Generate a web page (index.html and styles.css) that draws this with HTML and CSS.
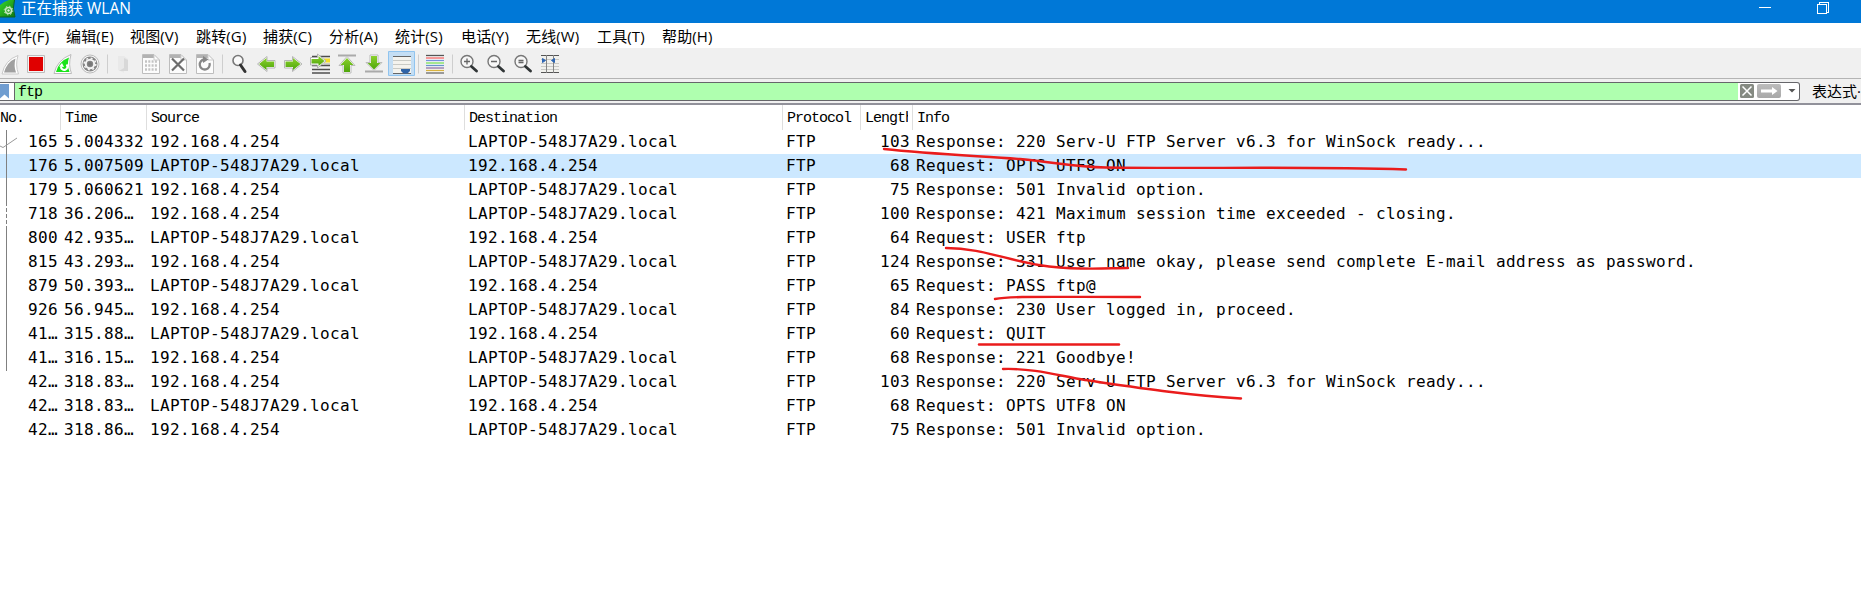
FILE: index.html
```
<!DOCTYPE html>
<html lang="zh-CN">
<head>
<meta charset="utf-8">
<title>正在捕获 WLAN</title>
<link rel="stylesheet" href="styles.css">
</head>
<body>
<svg width="0" height="0" class="defs">
  <defs>
    <linearGradient id="green" x1="0" y1="0" x2="0" y2="1"><stop offset="0" stop-color="#8ad02c"/><stop offset="1" stop-color="#4fa60c"/></linearGradient>
    <linearGradient id="logo" x1="0" y1="0" x2="1" y2="1"><stop offset="0" stop-color="#35d62c"/><stop offset="1" stop-color="#12770f"/></linearGradient>
    <linearGradient id="go" x1="0" y1="0" x2="0" y2="1"><stop offset="0" stop-color="#bcbcbc"/><stop offset="1" stop-color="#a8a8a8"/></linearGradient>
  </defs>
</svg>
<header class="titlebar">
  <svg class="logo" width="16" height="18" viewBox="0 0 16 18"><path d="M0 5Q4 1.500 9 0H14.500Q12 8 15 17H0Z" fill="url(#logo)"/><path d="M14.500 0Q12 8 15 17H0" fill="none" stroke="#0b6421"/><circle cx="8.500" cy="10.500" r="3" fill="none" stroke="#c9e9c2" stroke-width="1.500"/><circle cx="8.500" cy="10.500" r="1.200" fill="#e9f7e4"/><circle cx="8.500" cy="10.500" r="4.300" fill="none" stroke="#c9e9c2" stroke-dasharray="1.500 1.877"/></svg>
  <span class="caption">正在捕获 WLAN</span>
  <svg class="win" width="90" height="23" viewBox="0 0 90 23" fill="none" stroke="#fff" shape-rendering="crispEdges"><path d="M8 7.500H20"/><path d="M68.500 4V2.500H77.500V12H76"/><path d="M66.500 4.500H75.500V13.500H66.500Z"/></svg>
</header>
<nav class="menu">
  <span>文件(F)</span><span>编辑(E)</span><span>视图(V)</span><span>跳转(G)</span><span>捕获(C)</span><span>分析(A)</span><span>统计(S)</span><span>电话(Y)</span><span>无线(W)</span><span>工具(T)</span><span>帮助(H)</span>
</nav>
<div class="toolbar">
  <svg width="570" height="28" viewBox="0 50 570 28">
    <!-- start -->
    <path d="M2 74Q5 60 18 55.500Q15 65 18.500 74Z" fill="#fff" stroke="#c9c9c9"/><path d="M4 72.500Q7 62 15.500 58.500Q13.500 66 16 72.500Z" fill="#a0a0a0"/>
    <!-- stop -->
    <path d="M27.500 55.500H44.500V72.500H27.500Z" fill="#f4f4f4" stroke="#bdbdbd"/><path d="M29 57H43V71H29Z" fill="#e00000"/>
    <!-- restart -->
    <path d="M54 73.500Q57 60 71 54.500Q68 65 71.500 73.500Z" fill="#fff" stroke="#bbb"/><path d="M56 72Q59 61 69 57.500Q66.500 65 69.500 72Z" fill="#19e319"/><path d="M61 66.500A3.200 3.200 0 1 0 66.500 64.500" fill="none" stroke="#fff" stroke-width="2"/><path d="M59 66.500L62 63L64 67Z" fill="#fff"/>
    <!-- options -->
    <circle cx="90" cy="64" r="9" fill="#f8f8f8" stroke="#bbb"/><circle cx="90" cy="64" r="7.500" fill="#858585"/><circle cx="90" cy="64" r="4.200" fill="none" stroke="#f4f4f4" stroke-width="2"/><circle cx="90" cy="64" r="5.800" fill="none" stroke="#f4f4f4" stroke-width="1.500" stroke-dasharray="2 2.550"/><circle cx="90" cy="64" r="2" fill="#777"/>
    <path d="M107.500 54.500V73.500M222.500 54.500V73.500M418.500 54.500V73.500M452.500 54.500V73.500" stroke="#cecece"/>
    <!-- open -->
    <path d="M118 56H124L128 59V71H124V73L118 70Z" fill="#e9e9e9"/><path d="M124 58L128 60V71H119L124 68Z" fill="#d8d8d8"/>
    <!-- save, close, reload -->
    <g fill="#fcfcfc" stroke="#bdbdbd"><path d="M142.500 54.500H154L159.500 60V73.500H142.500Z"/><path d="M169.500 54.500H181L186.500 60V73.500H169.500Z"/><path d="M196.500 54.500H208L213.500 60V73.500H196.500Z"/></g>
    <g fill="#b2b2b2"><path d="M143 55H154V58H143ZM170 55H181V58H170ZM197 55H208V58H197Z"/></g>
    <path d="M154 55V60H159M181 55V60H186M208 55V60H213" fill="none" stroke="#ccc"/>
    <path d="M145 61.500H158M145 65.500H158M145 69.500H158" stroke="#c3c3c3" stroke-width="2.500" stroke-dasharray="2 1.300"/>
    <path d="M172 58.500L184 70.500M184 58.500L172 70.500" stroke="#6c6c6c" stroke-width="2.200"/>
    <path d="M209.500 63A5 5 0 1 1 204.500 59.500" fill="none" stroke="#878787" stroke-width="2.300"/><path d="M203 56L208.500 59.500L203 63Z" fill="#878787"/>
    <!-- find -->
    <circle cx="238" cy="60.500" r="5" fill="#fafafa" stroke="#777" stroke-width="1.600"/><path d="M240.500 65L245 71.500" stroke="#333" stroke-width="3" stroke-linecap="round"/>
    <!-- navigation arrows -->
    <g fill="#fff" stroke="#b5b5b5"><path d="M257.500 64L267 56.500V60.500H275V68H267V71.500Z"/><path d="M302 64L292.500 56.500V60.500H284.500V68H292.500V71.500Z"/></g>
    <g fill="url(#green)"><path d="M259 64L266.500 58V61.500H274V67H266.500V70Z"/><path d="M300.500 64L293 58V61.500H285.500V67H293V70Z"/></g>
    <!-- go to packet -->
    <path d="M312 56.500H330M312 65.500H330M312 69.500H330M312 73H330" stroke="#4d4d4d" stroke-width="1.300"/><path d="M324 60.500H330" stroke="#f3dc2c" stroke-width="4"/><path d="M324 64H330" stroke="#aaa"/>
    <path d="M310.500 57.500H317.500V54L326 61L317.500 68V65H310.500Z" fill="#fff" stroke="#b2b2b2"/><path d="M311.500 59H318.500V56L324.500 61L318.500 66V63.500H311.500Z" fill="url(#green)"/>
    <!-- first and last -->
    <path d="M338 55.500H356M365 71.500H383" stroke="#aaa" stroke-width="2"/>
    <path d="M347 56.500L355 65.500H351V73H343V65.500H339Z" fill="#fff" stroke="#bbb"/><path d="M347 58L353.500 65H350V72H344V65H340.500Z" fill="url(#green)"/>
    <path d="M374 70.500L382 62.500H378V55H370V62.500H366Z" fill="#fff" stroke="#bbb"/><path d="M374 69.500L380.500 63H377V56H371V63H367.500Z" fill="url(#green)"/>
    <!-- auto scroll -->
    <path d="M388.500 51.500H414.500V75.500H388.500Z" fill="#c4def4" stroke="#90c4ef"/><path d="M393 56H411V74H393Z" fill="#f4f3ee"/><path d="M393 56.500H411M393 73.500H411" stroke="#666"/><path d="M393 60.500H411M393 64.500H411M393 68.500H411" stroke="#c9cac5"/><path d="M401 69H410V71L407.500 73.500H403.500L401 71Z" fill="#2f63a6"/>
    <!-- colorize -->
    <path d="M426 55H444V74H426Z" fill="#f8f8f8"/><g stroke-width="1.300"><path d="M426 55.500H444" stroke="#555"/><path d="M426 58H444" stroke="#f36464"/><path d="M426 60.500H444" stroke="#7693db"/><path d="M426 63H444" stroke="#77df55"/><path d="M426 65.500H444" stroke="#6795c9"/><path d="M426 68H444" stroke="#8d71a4"/><path d="M426 70.500H444" stroke="#d9b33f"/><path d="M426 73H444" stroke="#666"/></g>
    <!-- zoom -->
    <g fill="#f7f7f7" stroke="#777" stroke-width="1.400"><circle cx="467" cy="61.500" r="6"/><circle cx="494" cy="61.500" r="6"/><circle cx="521" cy="61.500" r="6"/></g>
    <path d="M471.500 66.500L476.500 71M498.500 66.500L503.500 71M525.500 66.500L530.500 71" stroke="#303536" stroke-width="2.800" stroke-linecap="round"/>
    <path d="M464 61.500H470M467 58.500V64.500M491 61.500H497M518.500 60.500H523.500M518.500 62.500H523.500" stroke="#666" stroke-width="1.300"/>
    <!-- resize columns -->
    <path d="M541 55H559V73H541Z" fill="#f1f1ed"/><path d="M541 55.500H559M541 72.500H559" stroke="#555"/><path d="M541 59.500H559M541 63.500H559M541 66.500H559M541 69.500H559" stroke="#c9c9c5"/><path d="M546.500 55V73M553.500 55V73" stroke="#858585"/><path d="M542.500 58.500L545.500 60.500L542.500 62.500ZM554.500 58.500V62.500L551.500 60.500Z" fill="#2e65b2" stroke="#2e65b2"/>
  </svg>
</div>
<div class="filterbar">
  <div class="filter">
    <div class="mark"><svg width="9" height="15" viewBox="0 0 9 15"><path d="M0 0H9V14.500L4.500 10.500L0 14.500Z" fill="#709dd0"/></svg></div>
    <div class="query">ftp</div>
    <svg class="controls" width="61" height="17" viewBox="0 0 61 17"><rect x="2" y="1" width="14" height="14" rx="1.500" fill="#858a82"/><path d="M4.500 3.500L13.500 12.500M13.500 3.500L4.500 12.500" stroke="#fff" stroke-width="1.500"/><rect x="19" y="1" width="24" height="14" rx="2" fill="url(#go)"/><path d="M23 6.500H34V4L39.500 8L34 12V9.500H23Z" fill="#fff"/><path d="M50.500 6H57.500L54 9.500Z" fill="#555"/></svg>
  </div>
  <div class="expression">表达式·</div>
</div>
<main class="packets">
  <div class="head"><span>No.</span><span>Time</span><span>Source</span><span>Destination</span><span>Protocol</span><span class="length"><i>Length</i></span><span>Info</span></div>
  <div class="row"><span>165</span><span>5.004332</span><span>192.168.4.254</span><span>LAPTOP-548J7A29.local</span><span>FTP</span><span>103</span><span>Response: 220 Serv-U FTP Server v6.3 for WinSock ready...</span></div>
  <div class="row selected"><span>176</span><span>5.007509</span><span>LAPTOP-548J7A29.local</span><span>192.168.4.254</span><span>FTP</span><span>68</span><span>Request: OPTS UTF8 ON</span></div>
  <div class="row"><span>179</span><span>5.060621</span><span>192.168.4.254</span><span>LAPTOP-548J7A29.local</span><span>FTP</span><span>75</span><span>Response: 501 Invalid option.</span></div>
  <div class="row"><span>718</span><span>36.206…</span><span>192.168.4.254</span><span>LAPTOP-548J7A29.local</span><span>FTP</span><span>100</span><span>Response: 421 Maximum session time exceeded - closing.</span></div>
  <div class="row"><span>800</span><span>42.935…</span><span>LAPTOP-548J7A29.local</span><span>192.168.4.254</span><span>FTP</span><span>64</span><span>Request: USER ftp</span></div>
  <div class="row"><span>815</span><span>43.293…</span><span>192.168.4.254</span><span>LAPTOP-548J7A29.local</span><span>FTP</span><span>124</span><span>Response: 331 User name okay, please send complete E-mail address as password.</span></div>
  <div class="row"><span>879</span><span>50.393…</span><span>LAPTOP-548J7A29.local</span><span>192.168.4.254</span><span>FTP</span><span>65</span><span>Request: PASS ftp@</span></div>
  <div class="row"><span>926</span><span>56.945…</span><span>192.168.4.254</span><span>LAPTOP-548J7A29.local</span><span>FTP</span><span>84</span><span>Response: 230 User logged in, proceed.</span></div>
  <div class="row"><span>41…</span><span>315.88…</span><span>LAPTOP-548J7A29.local</span><span>192.168.4.254</span><span>FTP</span><span>60</span><span>Request: QUIT</span></div>
  <div class="row"><span>41…</span><span>316.15…</span><span>192.168.4.254</span><span>LAPTOP-548J7A29.local</span><span>FTP</span><span>68</span><span>Response: 221 Goodbye!</span></div>
  <div class="row"><span>42…</span><span>318.83…</span><span>192.168.4.254</span><span>LAPTOP-548J7A29.local</span><span>FTP</span><span>103</span><span>Response: 220 Serv-U FTP Server v6.3 for WinSock ready...</span></div>
  <div class="row"><span>42…</span><span>318.83…</span><span>LAPTOP-548J7A29.local</span><span>192.168.4.254</span><span>FTP</span><span>68</span><span>Request: OPTS UTF8 ON</span></div>
  <div class="row"><span>42…</span><span>318.86…</span><span>192.168.4.254</span><span>LAPTOP-548J7A29.local</span><span>FTP</span><span>75</span><span>Response: 501 Invalid option.</span></div>
</main>
<svg class="ink" width="1861" height="593" viewBox="0 0 1861 593" fill="none">
  <g stroke="#808080"><path d="M6.500 130V206M6.500 226V371"/><path d="M6.500 208V225" stroke-dasharray="4 2"/><path d="M0 146L3 147.500L17 138" stroke="#999"/></g>
  <g stroke="#ea1c1c" stroke-width="2.400" stroke-linecap="round">
    <path d="M884 149C930 154 980 156 1020 159C1060 163 1075 167 1106 167.500C1200 169 1300 166 1406 169.500"/>
    <path d="M946 248C993 248 1020 269 1083 268.500C1100 269 1115 268 1128 268"/>
    <path d="M995 299C1010 296 1040 297 1140 297"/>
    <path d="M979 344.500H1119"/>
    <path d="M1003 369C1035 368 1060 376 1085 380C1140 388 1185 395 1241 398.500"/>
  </g>
</svg>
</body>
</html>
```
FILE: styles.css
```
* { box-sizing: border-box; }
body { margin: 0; width: 1861px; height: 593px; overflow: hidden; background: #fff; color: #000; font-family: "Open Sans", "Noto Sans CJK SC", sans-serif; font-size: 15px; }
svg { display: block; flex: none; }
.defs { position: absolute; }
.titlebar { display: flex; height: 23px; background: #0078d7; color: #fff; }
.caption { flex: 1; padding-left: 5px; line-height: 17px; font-size: 15.500px; }
.win { margin-right: 20px; }
.logo { width: 16px; }
.menu { display: grid; grid-template-columns: 64px 64px 66px 67px 66px 66px 66px 65px 71px 65px 70px; height: 27px; padding-left: 2px; border-bottom: 2px solid #f0f0f0; line-height: 27px; white-space: nowrap; letter-spacing: .15px; }
.toolbar { height: 29px; background: #f0f0f0; border-bottom: 1px solid #b4b4b4; }
.filterbar { display: flex; height: 26px; padding-top: 3px; background: #f0f0f0; border-bottom: 2px solid #91919a; }
.filter { display: flex; width: 1801px; height: 19px; background: #fff; border: 1px solid #66666a; border-left: 0; border-radius: 0 3px 3px 0; }
.mark { width: 15px; padding-top: 1px; border-right: 1px solid #66666a; }
.query { flex: 1; background: #afffaf; padding-left: 3px; }
.query, .head { font-family: "Liberation Mono", monospace; font-size: 15px; letter-spacing: -1px; line-height: 19px; }
.filter .controls { margin-left: 0; }
.expression { padding-left: 12px; line-height: 18px; white-space: nowrap; overflow: hidden; }
.head, .row { display: grid; grid-template-columns: 61px 86px 318px 318px 78px 52px 948px; white-space: nowrap; }
.head { height: 25px; line-height: 28px; }
.head span { padding-left: 4px; border-right: 1px solid #dedede; overflow: hidden; }
.head span:first-child { padding-left: 0; }
.head span:last-child { border-right: 0; }
.head .length { padding-right: 4px; }
.length i { display: block; overflow: hidden; font-style: normal; }
.row { height: 24px; line-height: 23px; font-family: "DejaVu Sans Mono", monospace; font-size: 16px; letter-spacing: .367px; }
.row span { padding-left: 3px; }
.row span:first-child, .row span:nth-child(6) { padding: 0 3px 0 0; text-align: right; }
.selected { background: #cce8ff; }
.ink { position: absolute; left: 0; top: 0; pointer-events: none; }
```
